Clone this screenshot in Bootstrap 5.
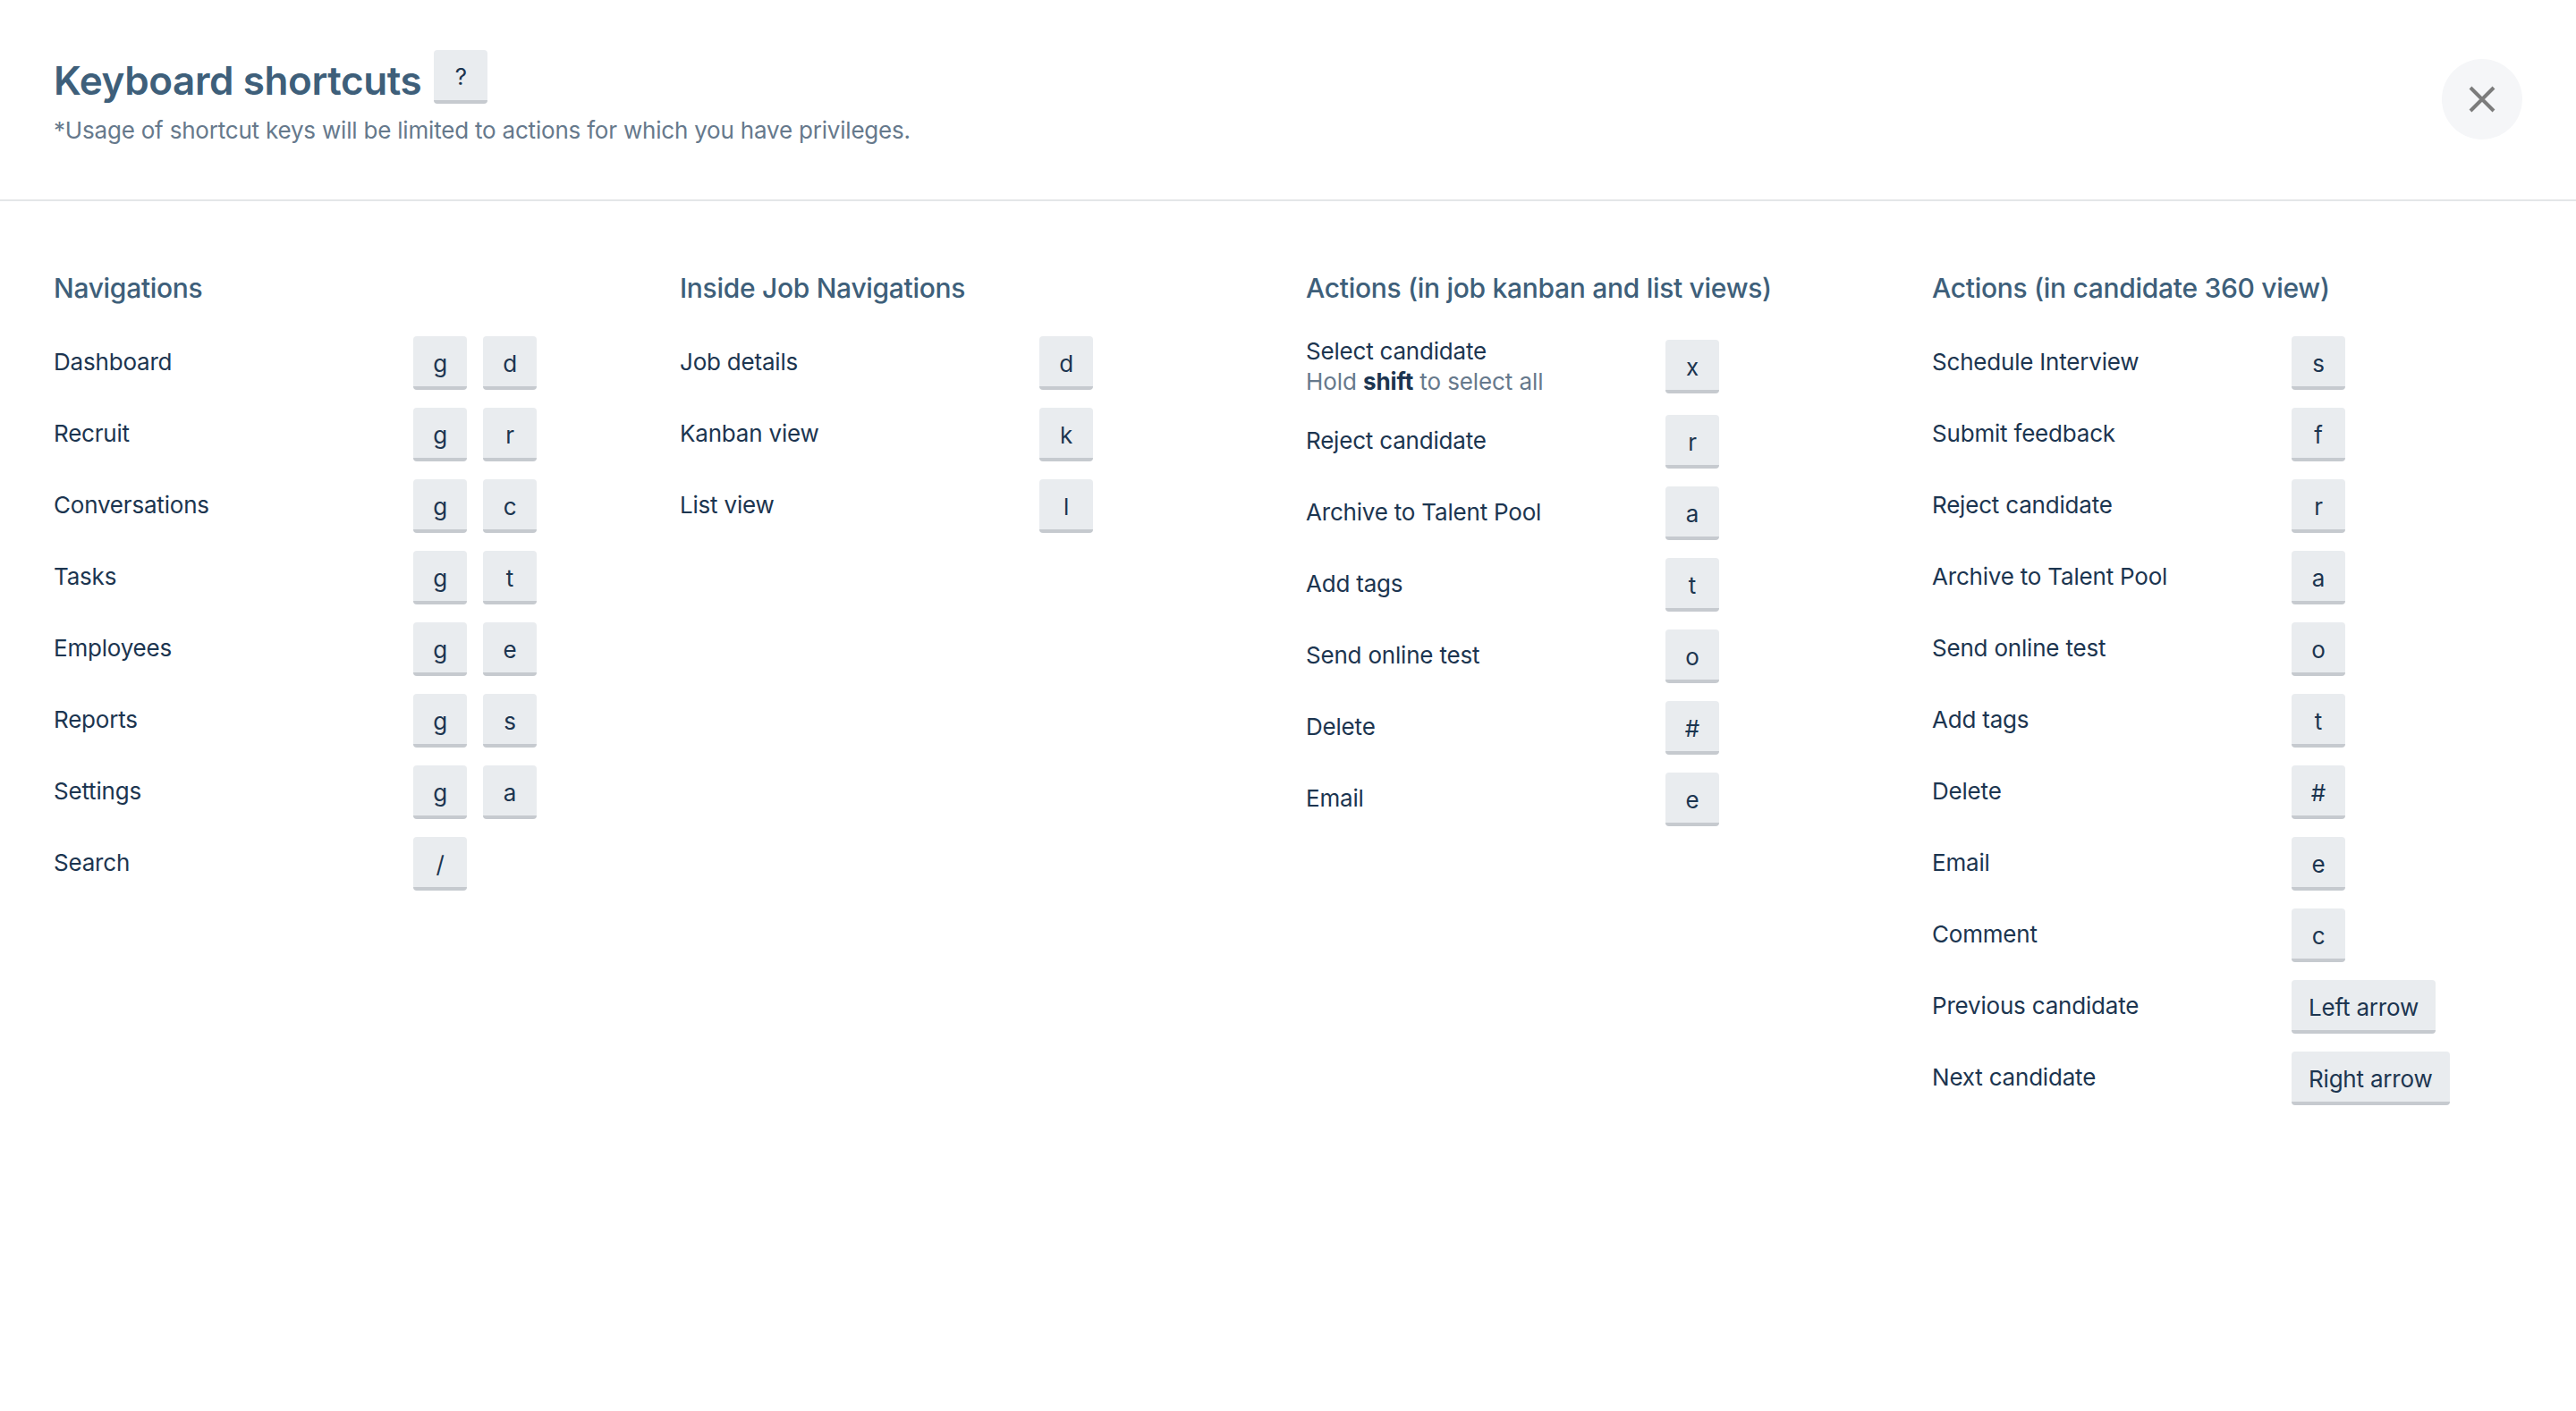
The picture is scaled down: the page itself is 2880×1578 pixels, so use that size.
<!DOCTYPE html>
<html lang="en">
<head>
<meta charset="utf-8">
<title>Keyboard shortcuts</title>
<link href="https://cdn.jsdelivr.net/npm/bootstrap@5.3.0/dist/css/bootstrap.min.css" rel="stylesheet">
<style>
body { font-family: Inter, "Liberation Sans", sans-serif; color: #1c3550; background: #fff; font-size: 26px; letter-spacing: -.2px; line-height: 34px; }
.sheet-head { height: 225px; padding: 56px 60px 0; border-bottom: 2px solid #e4e6e8; }
.sheet-title { font-size: 44px; letter-spacing: -.4px; line-height: 68px; font-weight: 600; color: #3e5f7a; margin: 0; }
.sheet-note { font-size: 26px; line-height: 36px; color: #66798c; margin-top: 4px; }
.close-disc { width: 90px; height: 90px; background: #f5f6f8; border: 0; margin-top: 10px; }
.cols { padding: 75px 20px 0 60px; }
.sec-title { font-size: 30px; letter-spacing: -.3px; line-height: 44px; font-weight: 500; color: #3e5f7a; margin: 0 0 32px; }
.sc-row { margin-bottom: 20px; min-height: 60px; }
.sc-label { width: 402px; flex: none; padding-bottom: 2px; }
.sc-sub { color: #66798c; letter-spacing: -.1px; }
.sc-sub b { color: #1c3550; font-weight: 700; }
.kbd-key { display: inline-block; min-width: 60px; height: 56px; box-sizing: content-box; padding: 0 19px; margin-right: 18px; border-radius: 4px; background: #e9ecef; border-bottom: 4px solid #c6cacf; color: #1c3550; font-size: 26px; line-height: 62px; text-align: center; }
.kbd-key.one { width: 60px; min-width: 0; padding: 0; }
.title-key { margin-left: 14px; margin-right: 0; font-size: 26px; line-height: 60px; font-weight: 400; }
</style>
</head>
<body>
<header class="sheet-head d-flex justify-content-between align-items-start">
  <div>
    <div class="d-flex align-items-start">
      <h1 class="sheet-title">Keyboard shortcuts</h1>
      <span class="kbd-key one title-key">?</span>
    </div>
    <div class="sheet-note">*Usage of shortcut keys will be limited to actions for which you have privileges.</div>
  </div>
  <button class="close-disc rounded-circle d-flex align-items-center justify-content-center p-0" aria-label="Close">
    <svg width="30" height="30" viewBox="0 0 30 30"><path d="M2 2L28 28M28 2L2 28" stroke="#7c7c7c" stroke-width="4" fill="none"/></svg>
  </button>
</header>
<main class="cols row g-0">
  <section class="col-3">
    <h2 class="sec-title">Navigations</h2>
    <div class="sc-row d-flex align-items-center"><div class="sc-label">Dashboard</div><span class="kbd-key one">g</span><span class="kbd-key one">d</span></div>
    <div class="sc-row d-flex align-items-center"><div class="sc-label">Recruit</div><span class="kbd-key one">g</span><span class="kbd-key one">r</span></div>
    <div class="sc-row d-flex align-items-center"><div class="sc-label">Conversations</div><span class="kbd-key one">g</span><span class="kbd-key one">c</span></div>
    <div class="sc-row d-flex align-items-center"><div class="sc-label">Tasks</div><span class="kbd-key one">g</span><span class="kbd-key one">t</span></div>
    <div class="sc-row d-flex align-items-center"><div class="sc-label">Employees</div><span class="kbd-key one">g</span><span class="kbd-key one">e</span></div>
    <div class="sc-row d-flex align-items-center"><div class="sc-label">Reports</div><span class="kbd-key one">g</span><span class="kbd-key one">s</span></div>
    <div class="sc-row d-flex align-items-center"><div class="sc-label">Settings</div><span class="kbd-key one">g</span><span class="kbd-key one">a</span></div>
    <div class="sc-row d-flex align-items-center"><div class="sc-label">Search</div><span class="kbd-key one">/</span></div>
  </section>
  <section class="col-3">
    <h2 class="sec-title">Inside Job Navigations</h2>
    <div class="sc-row d-flex align-items-center"><div class="sc-label">Job details</div><span class="kbd-key one">d</span></div>
    <div class="sc-row d-flex align-items-center"><div class="sc-label">Kanban view</div><span class="kbd-key one">k</span></div>
    <div class="sc-row d-flex align-items-center"><div class="sc-label">List view</div><span class="kbd-key one">l</span></div>
  </section>
  <section class="col-3">
    <h2 class="sec-title">Actions (in job kanban and list views)</h2>
    <div class="sc-row d-flex align-items-center"><div class="sc-label pb-0">Select candidate<div class="sc-sub">Hold <b>shift</b> to select all</div></div><span class="kbd-key one">x</span></div>
    <div class="sc-row d-flex align-items-center"><div class="sc-label">Reject candidate</div><span class="kbd-key one">r</span></div>
    <div class="sc-row d-flex align-items-center"><div class="sc-label">Archive to Talent Pool</div><span class="kbd-key one">a</span></div>
    <div class="sc-row d-flex align-items-center"><div class="sc-label">Add tags</div><span class="kbd-key one">t</span></div>
    <div class="sc-row d-flex align-items-center"><div class="sc-label">Send online test</div><span class="kbd-key one">o</span></div>
    <div class="sc-row d-flex align-items-center"><div class="sc-label">Delete</div><span class="kbd-key one">#</span></div>
    <div class="sc-row d-flex align-items-center"><div class="sc-label">Email</div><span class="kbd-key one">e</span></div>
  </section>
  <section class="col-3">
    <h2 class="sec-title">Actions (in candidate 360 view)</h2>
    <div class="sc-row d-flex align-items-center"><div class="sc-label">Schedule Interview</div><span class="kbd-key one">s</span></div>
    <div class="sc-row d-flex align-items-center"><div class="sc-label">Submit feedback</div><span class="kbd-key one">f</span></div>
    <div class="sc-row d-flex align-items-center"><div class="sc-label">Reject candidate</div><span class="kbd-key one">r</span></div>
    <div class="sc-row d-flex align-items-center"><div class="sc-label">Archive to Talent Pool</div><span class="kbd-key one">a</span></div>
    <div class="sc-row d-flex align-items-center"><div class="sc-label">Send online test</div><span class="kbd-key one">o</span></div>
    <div class="sc-row d-flex align-items-center"><div class="sc-label">Add tags</div><span class="kbd-key one">t</span></div>
    <div class="sc-row d-flex align-items-center"><div class="sc-label">Delete</div><span class="kbd-key one">#</span></div>
    <div class="sc-row d-flex align-items-center"><div class="sc-label">Email</div><span class="kbd-key one">e</span></div>
    <div class="sc-row d-flex align-items-center"><div class="sc-label">Comment</div><span class="kbd-key one">c</span></div>
    <div class="sc-row d-flex align-items-center"><div class="sc-label">Previous candidate</div><span class="kbd-key">Left arrow</span></div>
    <div class="sc-row d-flex align-items-center"><div class="sc-label">Next candidate</div><span class="kbd-key">Right arrow</span></div>
  </section>
</main>
<script src="https://cdn.jsdelivr.net/npm/bootstrap@5.3.0/dist/js/bootstrap.bundle.min.js"></script>
</body>
</html>
